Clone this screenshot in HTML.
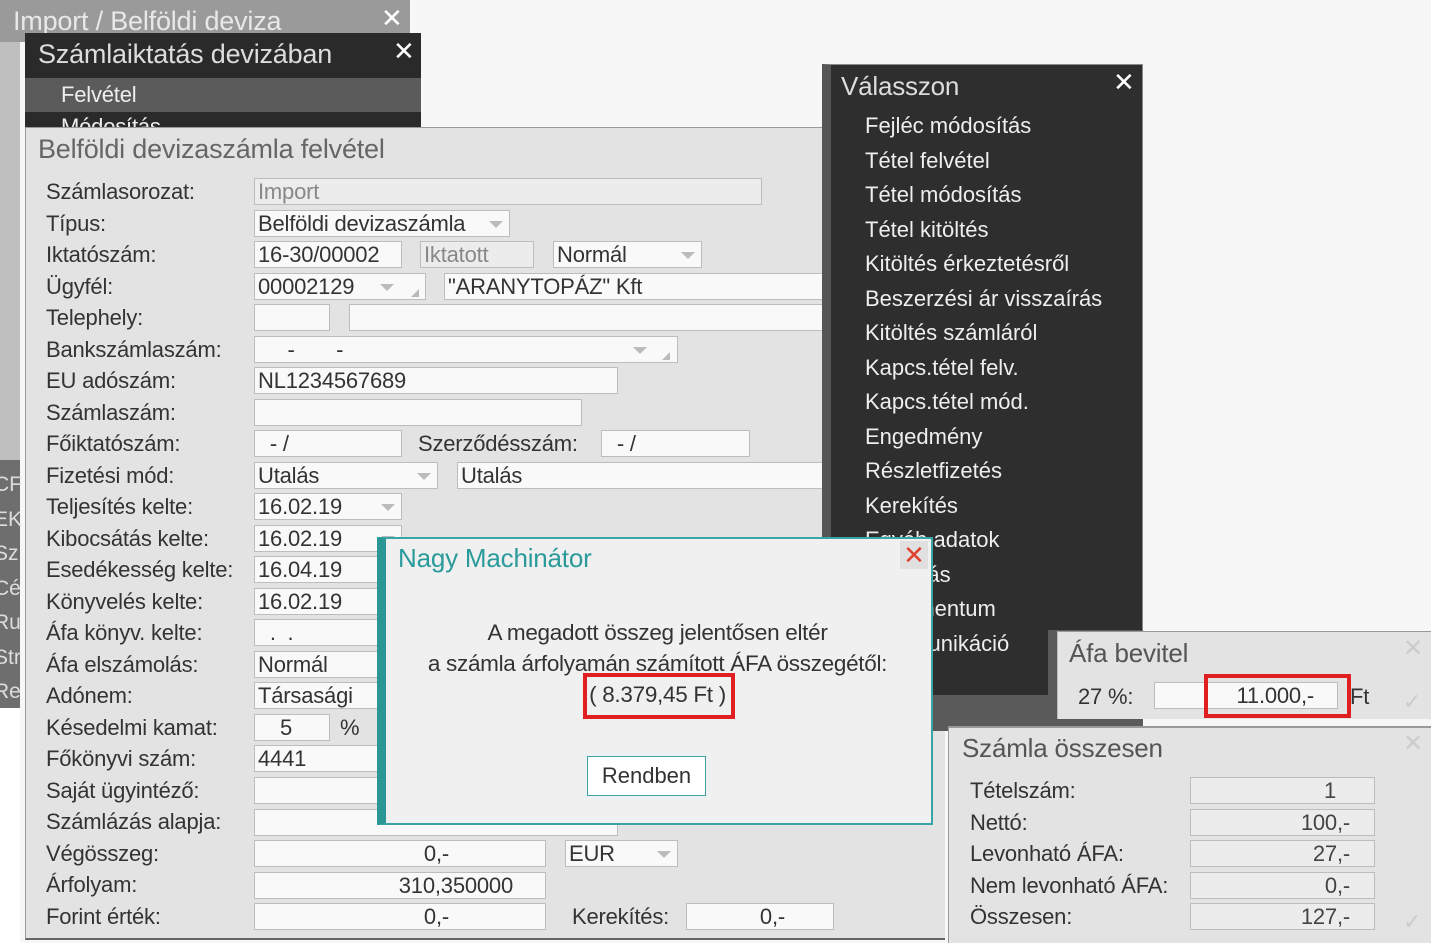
<!DOCTYPE html>
<html><head><meta charset="utf-8"><style>
*{box-sizing:border-box;margin:0;padding:0}
body{width:1431px;height:943px;position:relative;overflow:hidden;background:#f7f7f7;font-family:"Liberation Sans",sans-serif;font-size:22px;color:#333}
div{position:absolute}
.l{white-space:nowrap;line-height:24px;letter-spacing:-0.2px}
.i{background:#f9f9f9;border:1px solid #bdbdbd;height:27px;line-height:26px;padding-left:3px;white-space:nowrap;overflow:hidden;letter-spacing:-0.2px}
.ro{background:#ececec;color:#888}
.ar{width:0;height:0;border-left:7px solid transparent;border-right:7px solid transparent;border-top:7px solid #bbb}
.cr{width:0;height:0;border-left:8px solid transparent;border-bottom:8px solid #bbb}
.m{color:#eee;white-space:nowrap;font-size:22px;line-height:24px}
.r{text-align:right}
</style></head><body>
<!-- left strip -->
<div style="left:0;top:0;width:20px;height:943px;background:#fff"></div>
<div style="left:0;top:40px;width:20px;height:668px;background:#bfbfbf"></div>
<div style="left:0;top:460px;width:20px;height:248px;background:#6e6e6e"></div>
<div class="m" style="left:-6px;top:468px;color:#ddd;line-height:34.5px;font-size:21px">CF<br>EK<br>Sz<br>Cé<br>Ru<br>Str<br>Re</div>
<!-- Import panel -->
<div style="left:0;top:0;width:410px;height:42px;background:#9a9a9a"></div>
<div class="l" style="left:13px;top:9px;font-size:27px;color:#e8e8e8">Import / Belföldi deviza</div>
<div class="l" style="left:381px;top:6px;font-size:26px;color:#fff">✕</div>
<!-- Számlaiktatás -->
<div style="left:25px;top:33px;width:396px;height:100px;background:#2a2a2a"></div>
<div class="l" style="left:38px;top:42px;font-size:27px;color:#ddd">Számlaiktatás devizában</div>
<div class="l" style="left:393px;top:39px;font-size:26px;color:#fff">✕</div>
<div style="left:25px;top:78px;width:396px;height:34px;background:#5b5b5b"></div>
<div class="l" style="left:61px;top:83px;color:#eee">Felvétel</div>
<div class="l" style="left:61px;top:115px;color:#eee">Módosítás</div>
<!-- Form panel -->
<div style="left:25px;top:127px;width:920px;height:813px;background:#e3e3e3;border-top:1px solid #999;border-left:1px solid #999;border-bottom:2px solid #666"></div>
<div class="l" style="left:38px;top:137px;font-size:27px;color:#666">Belföldi devizaszámla felvétel</div>
<div class="l" style="left:46px;top:176px;line-height:31.5px">Számlasorozat:<br>Típus:<br>Iktatószám:<br>Ügyfél:<br>Telephely:<br>Bankszámlaszám:<br>EU adószám:<br>Számlaszám:<br>Főiktatószám:<br>Fizetési mód:<br>Teljesítés kelte:<br>Kibocsátás kelte:<br>Esedékesség kelte:<br>Könyvelés kelte:<br>Áfa könyv. kelte:<br>Áfa elszámolás:<br>Adónem:<br>Késedelmi kamat:<br>Főkönyvi szám:<br>Saját ügyintéző:<br>Számlázás alapja:<br>Végösszeg:<br>Árfolyam:<br>Forint érték:</div>
<div class="i ro" style="left:254px;top:178px;width:508px">Import</div>
<div class="i" style="left:254px;top:210px;width:256px">Belföldi devizaszámla</div><div class="ar" style="left:489px;top:221px"></div>
<div class="i" style="left:254px;top:241px;width:148px">16-30/00002</div>
<div class="i ro" style="left:420px;top:241px;width:114px">Iktatott</div>
<div class="i" style="left:553px;top:241px;width:149px">Normál</div><div class="ar" style="left:681px;top:252px"></div>
<div class="i" style="left:254px;top:273px;width:172px">00002129</div><div class="ar" style="left:380px;top:284px"></div><div class="cr" style="left:411px;top:289px"></div>
<div class="i" style="left:444px;top:273px;width:380px">"ARANYTOPÁZ" Kft</div>
<div class="i" style="left:254px;top:304px;width:76px"></div>
<div class="i" style="left:349px;top:304px;width:475px"></div>
<div class="i" style="left:254px;top:336px;width:424px">&nbsp;&nbsp;&nbsp;&nbsp;&nbsp;-&nbsp;&nbsp;&nbsp;&nbsp;&nbsp;&nbsp;&nbsp;-</div><div class="ar" style="left:633px;top:347px"></div><div class="cr" style="left:662px;top:352px"></div>
<div class="i" style="left:254px;top:367px;width:364px">NL1234567689</div>
<div class="i" style="left:254px;top:399px;width:328px"></div>
<div class="i" style="left:254px;top:430px;width:148px">&nbsp;&nbsp;- /</div>
<div class="l" style="left:418px;top:432px">Szerződésszám:</div>
<div class="i" style="left:601px;top:430px;width:149px">&nbsp;&nbsp;- /</div>
<div class="i" style="left:254px;top:462px;width:184px">Utalás</div><div class="ar" style="left:417px;top:473px"></div>
<div class="i" style="left:457px;top:462px;width:367px">Utalás</div>
<div class="i" style="left:254px;top:493px;width:148px">16.02.19</div><div class="ar" style="left:381px;top:504px"></div>
<div class="i" style="left:254px;top:525px;width:148px">16.02.19</div><div class="ar" style="left:381px;top:536px"></div>
<div class="i" style="left:254px;top:556px;width:148px">16.04.19</div>
<div class="i" style="left:254px;top:588px;width:148px">16.02.19</div>
<div class="i" style="left:254px;top:619px;width:148px">&nbsp;&nbsp;.&nbsp;&nbsp;.</div>
<div class="i" style="left:254px;top:651px;width:148px">Normál</div>
<div class="i" style="left:254px;top:682px;width:148px">Társasági</div>
<div class="i" style="left:254px;top:714px;width:76px;padding-left:25px">5</div>
<div class="l" style="left:340px;top:716px">%</div>
<div class="i" style="left:254px;top:745px;width:148px">4441</div>
<div class="i" style="left:254px;top:777px;width:148px"></div>
<div class="i" style="left:254px;top:809px;width:364px"></div>
<div class="i r" style="left:254px;top:840px;width:292px;padding-right:96px">0,-</div>
<div class="i" style="left:565px;top:840px;width:113px">EUR</div><div class="ar" style="left:657px;top:851px"></div>
<div class="i r" style="left:254px;top:872px;width:292px;padding-right:32px">310,350000</div>
<div class="i r" style="left:254px;top:903px;width:292px;padding-right:96px">0,-</div>
<div class="l" style="left:572px;top:905px">Kerekítés:</div>
<div class="i r" style="left:686px;top:903px;width:148px;padding-right:48px">0,-</div>
<!-- Válasszon -->
<div style="left:822px;top:64px;width:321px;height:632px;background:#2e2e2e;border-left:9px solid #555;border-top:1px solid #888;border-right:1px solid #888"></div>
<div style="left:822px;top:695px;width:321px;height:36px;background:#5a5a5a"></div>
<div style="left:1048px;top:630px;width:95px;height:100px;background:#5a5a5a"></div>
<div class="l" style="left:841px;top:74px;font-size:26px;color:#ddd">Válasszon</div>
<div class="l" style="left:1113px;top:70px;font-size:26px;color:#fff">✕</div>
<div class="m" style="left:865px;top:109px;line-height:34.5px">Fejléc módosítás<br>Tétel felvétel<br>Tétel módosítás<br>Tétel kitöltés<br>Kitöltés érkeztetésről<br>Beszerzési ár visszaírás<br>Kitöltés számláról<br>Kapcs.tétel felv.<br>Kapcs.tétel mód.<br>Engedmény<br>Részletfizetés<br>Kerekítés<br>Egyéb adatok<br>Csatolás<br>Dokumentum<br>Kommunikáció<br>Export<br>Törlés</div>
<!-- Dialog -->
<div style="left:377px;top:537px;width:556px;height:288px;background:#f0f0f0;border:2px solid #3aa5a5;border-left:9px solid #2b9696"></div>
<div class="l" style="left:398px;top:546px;font-size:26px;color:#2a9a9a">Nagy Machinátor</div>
<div style="left:900px;top:541px;width:28px;height:28px;background:#e0e0e0;color:#e04030;font-size:26px;line-height:28px;text-align:center">✕</div>
<div class="l" style="left:385px;top:617px;width:545px;text-align:center;line-height:31px;font-size:22.5px;letter-spacing:-0.3px">A megadott összeg jelentősen eltér<br>a számla árfolyamán számított ÁFA összegétől:<br>( 8.379,45 Ft )</div>
<div style="left:583px;top:673px;width:152px;height:46px;border:4px solid #e02020"></div>
<div style="left:587px;top:756px;width:119px;height:40px;background:#fff;border:1px solid #3aa5a5;text-align:center;line-height:38px">Rendben</div>
<!-- Áfa bevitel -->
<div style="left:1057px;top:631px;width:374px;height:88px;background:#e3e3e3;border-top:1px solid #999;border-left:1px solid #bbb"></div>
<div class="l" style="left:1069px;top:641px;font-size:26px;color:#555">Áfa bevitel</div>
<div class="l" style="left:1403px;top:637px;font-size:24px;color:#ccc">✕</div>
<div class="l" style="left:1078px;top:685px">27 %:</div>
<div class="i r" style="left:1154px;top:682px;width:184px;padding-right:23px">11.000,-</div>
<div style="left:1204px;top:674px;width:147px;height:44px;border:4px solid #e02020"></div>
<div class="l" style="left:1350px;top:685px">Ft</div>
<div class="l" style="left:1403px;top:690px;font-size:22px;color:#ccc">✓</div>
<!-- Számla összesen -->
<div style="left:948px;top:726px;width:483px;height:217px;background:#e3e3e3;border-top:2px solid #999;border-left:1px solid #999"></div>
<div class="l" style="left:962px;top:736px;font-size:26px;color:#555">Számla összesen</div>
<div class="l" style="left:1403px;top:732px;font-size:24px;color:#ccc">✕</div>
<div class="l" style="left:970px;top:775px;line-height:31.6px">Tételszám:<br>Nettó:<br>Levonható ÁFA:<br>Nem levonható ÁFA:<br>Összesen:</div>
<div class="i ro r" style="left:1190px;top:777px;width:185px;padding-right:38px;color:#444">1</div>
<div class="i ro r" style="left:1190px;top:809px;width:185px;padding-right:24px;color:#444">100,-</div>
<div class="i ro r" style="left:1190px;top:840px;width:185px;padding-right:24px;color:#444">27,-</div>
<div class="i ro r" style="left:1190px;top:872px;width:185px;padding-right:24px;color:#444">0,-</div>
<div class="i ro r" style="left:1190px;top:903px;width:185px;padding-right:24px;color:#444">127,-</div>
<div class="l" style="left:1403px;top:910px;font-size:22px;color:#ccc">✓</div>
</body></html>
